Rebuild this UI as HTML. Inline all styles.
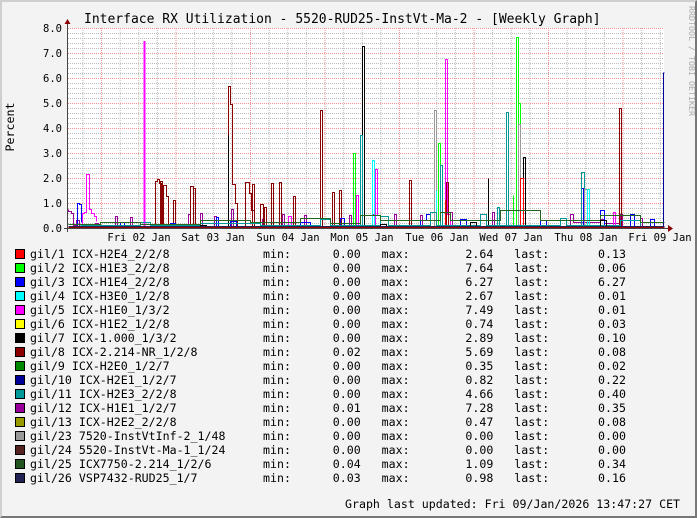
<!DOCTYPE html>
<html><head><meta charset="utf-8"><style>
html,body{margin:0;padding:0}
body{width:697px;height:518px;position:relative;background:#f3f3f3;overflow:hidden;font-family:"DejaVu Sans Mono","Liberation Mono",monospace;color:#000}
.fr{position:absolute;left:0;top:0;width:697px;height:518px;box-sizing:border-box;border-left:2px solid #cfcfcf;border-top:2px solid #cfcfcf;border-right:2px solid #777;border-bottom:2px solid #777}
.t{position:absolute;white-space:pre;font-size:11.6px;line-height:14px}
.sq{position:absolute;left:15px;width:8px;height:8px;border:1px solid #000}
</style></head><body>
<div class="fr"></div>
<div class="t" style="left:84px;top:12px;font-size:13px;line-height:16px">Interface RX Utilization - 5520-RUD25-InstVt-Ma-2 - [Weekly Graph]</div>
<div class="t" style="left:-20px;top:120px;transform:rotate(-90deg);font-size:11.6px;width:60px;text-align:center">Percent</div>
<div class="t" style="left:632px;top:54px;transform:rotate(90deg);font-size:8.3px;color:#aaa;width:120px;text-align:center">RRDTOOL / TOBI OETIKER</div>
<svg style="position:absolute;left:0;top:0" width="697" height="250">
<defs>
<pattern id="hm" x="0" y="228" width="10" height="5" patternUnits="userSpaceOnUse"><line x1="0" y1="0.5" x2="10" y2="0.5" stroke="#bbb" stroke-dasharray="1,1"/></pattern>
<pattern id="vm" x="101" y="0" width="18.625" height="10" patternUnits="userSpaceOnUse"><line x1="0.5" y1="0" x2="0.5" y2="10" stroke="#bbb" stroke-dasharray="1,1"/></pattern>
<pattern id="hM" x="0" y="228" width="10" height="25" patternUnits="userSpaceOnUse"><line x1="0" y1="0.5" x2="10" y2="0.5" stroke="#f09090" stroke-dasharray="1,1"/></pattern>
<pattern id="vM" x="101" y="0" width="74.5" height="10" patternUnits="userSpaceOnUse"><line x1="0.5" y1="0" x2="0.5" y2="10" stroke="#f09090" stroke-dasharray="1,1"/></pattern>
</defs>
<rect x="68" y="28" width="596" height="200" fill="#fff"/>
<rect x="68" y="28" width="596" height="200" fill="url(#hm)"/>
<rect x="69" y="28" width="595" height="200" fill="url(#vm)"/>
<rect x="68" y="28" width="596" height="200" fill="url(#hM)"/>
<rect x="69" y="28" width="595" height="200" fill="url(#vM)"/>
<g fill="none" stroke-width="1" transform="translate(0.5,0.5)">
<path stroke="#990099" d="M68 209V211H71V213H73V225H76V220H79V226H95V223H98V228M115 228V216H117V228M130 228V217H132V228M188 228V214H190V228M200 228V213H202V228M214 228V216H216V228M231 228V209H233V228M262 228V219H264V228M282 228V214H284V228M304 228V215H306V228M349 228V215H351V228M372 228V214H374V228M394 228V214H396V228M420 228V215H422V228M450 228V212H452V228M492 228V212H494V228M570 228V214H573V222H600V219H604V223H620V214H622V226H640V218H642V226H664"/>
<path stroke="#ff00ff" stroke-width="2" d="M144 228V40.5"/>
<path stroke="#ff00ff" d="M82 224V213H84V212H86V174H89V209H91V213H94V216H96V221M288 228V216H291V228M445 228V59H447V214H450V228M375 228V169H377V215M356 228V195H358V228M613 228V212H615V228M604 228V215"/>
<path stroke="#0000ff" d="M77 228V203H79V204H81V222M216 228V217H218V228M581 228V188H583V228"/>
<path stroke="#000099" d="M663 228V72.5H664"/>
<path stroke="#8b0000" d="M155 228V181H157V179H159V183H161V228M160 228V181H162V228M163 228V185H166V196H168V228M173 228V200H175V228M190 228V186H193V228M193 228V188H195V228M228 228V86H230V104H232V184H235V203H237V228M245 228V182H247V182H249V193H251V210H254V228M252 228V184H254V228M260 228V204H263V228M264 228V207H266V228M271 228V183H273V228M279 228V182H281V228M293 228V196H295V228M320 228V110H322V228M332 228V192H334V228M339 228V190H341V228M409 228V180H411V228M446 228V182H448V228M619 228V108H621V228"/>
<path stroke="#000" d="M362 228V46H364V228M228 228V135M523 228V157H525V228M488 228V178"/>
<path stroke="#00ff00" d="M353 228V153H355V228M438 228V143H440V228M516 228V37H518V228M518 228V103H520V228M513 228V195"/>
<path stroke="#009999" d="M360 228V135H362V228M506 228V112H508V228M581 228V172H584V228M440 228V165H442V228M497 228V207H499V228"/>
<path stroke="#999" d="M434 228V110H436V228M518 228V124H520V228M584 228V189H587V228"/>
<path stroke="#00ffff" d="M372 228V160H374V228M587 228V189H589V228M436 228V190"/>
<path stroke="#ff0000" d="M520 228V178H523V228M445 228V200"/>
<path stroke="#0000ff" d="M100 226H120V222H124V226H170V223H175V226H230V221H236V226H300V222H310V226H340V218H344V226H420V220H426V214H430V226H460V219H466V226H540V220H546V226H600V210H604V226H630V214H634V226H650V219H654V226"/>
<path stroke="#009999" d="M80 225H140V222H150V225H200V223H260V225H320V219H330V225H380V216H388V225H430V212H436V225H480V214H486V225H560V218H566V225H620V220H640V225"/>
<path stroke="#226622" d="M68 224H100V222H140V224H200V220H250V222H300V218H330V223H360V215H380V220H440V212H450V220H500V210H540V220H600V215H640V222H664"/>
<path stroke="#000" d="M90 227H200V225H206V227H380V224H386V227H470V222H476V227H600V220H606V227H664"/>
<path stroke="#222255" d="M68 226H664"/>
<path stroke="#990000" d="M68 227H664"/>
</g>
<line x1="67.5" y1="22" x2="67.5" y2="232" stroke="#444"/>
<line x1="64" y1="228.5" x2="668" y2="228.5" stroke="#444"/>
<path d="M64.5 24L67.5 19L70.5 24Z" fill="#8b0000"/>
<path d="M668 225L673 228.5L668 232Z" fill="#8b0000"/>
<g font-family="DejaVu Sans Mono,monospace" font-size="10.5" text-anchor="end">
<text x="62" y="32">8.0</text><text x="62" y="57">7.0</text><text x="62" y="82">6.0</text><text x="62" y="107">5.0</text><text x="62" y="132">4.0</text><text x="62" y="157">3.0</text><text x="62" y="182">2.0</text><text x="62" y="207">1.0</text><text x="62" y="232">0.0</text>
</g>
<g font-family="DejaVu Sans Mono,monospace" font-size="10.5" text-anchor="middle">
<text x="139" y="241">Fri 02 Jan</text><text x="213" y="241">Sat 03 Jan</text><text x="288" y="241">Sun 04 Jan</text><text x="362" y="241">Mon 05 Jan</text><text x="437" y="241">Tue 06 Jan</text><text x="511" y="241">Wed 07 Jan</text><text x="586" y="241">Thu 08 Jan</text><text x="660" y="241">Fri 09 Jan</text>
</g>
</svg>

<div class="sq" style="top:249px;background:#ff0000"></div><div class="t" style="left:30px;top:247px">gil/1 ICX-H2E4_2/2/8</div><div class="t" style="left:263px;top:247px">min:      0.00   max:        2.64   last:       0.13</div>
<div class="sq" style="top:263px;background:#00ff00"></div><div class="t" style="left:30px;top:261px">gil/2 ICX-H1E3_2/2/8</div><div class="t" style="left:263px;top:261px">min:      0.00   max:        7.64   last:       0.06</div>
<div class="sq" style="top:277px;background:#0000ff"></div><div class="t" style="left:30px;top:275px">gil/3 ICX-H1E4_2/2/8</div><div class="t" style="left:263px;top:275px">min:      0.00   max:        6.27   last:       6.27</div>
<div class="sq" style="top:291px;background:#00ffff"></div><div class="t" style="left:30px;top:289px">gil/4 ICX-H3E0_1/2/8</div><div class="t" style="left:263px;top:289px">min:      0.00   max:        2.67   last:       0.01</div>
<div class="sq" style="top:305px;background:#ff00ff"></div><div class="t" style="left:30px;top:303px">gil/5 ICX-H1E0_1/3/2</div><div class="t" style="left:263px;top:303px">min:      0.00   max:        7.49   last:       0.01</div>
<div class="sq" style="top:319px;background:#ffff00"></div><div class="t" style="left:30px;top:317px">gil/6 ICX-H1E2_1/2/8</div><div class="t" style="left:263px;top:317px">min:      0.00   max:        0.74   last:       0.03</div>
<div class="sq" style="top:333px;background:#000000"></div><div class="t" style="left:30px;top:331px">gil/7 ICX-1.000_1/3/2</div><div class="t" style="left:263px;top:331px">min:      0.00   max:        2.89   last:       0.10</div>
<div class="sq" style="top:347px;background:#8b0000"></div><div class="t" style="left:30px;top:345px">gil/8 ICX-2.214-NR_1/2/8</div><div class="t" style="left:263px;top:345px">min:      0.02   max:        5.69   last:       0.08</div>
<div class="sq" style="top:361px;background:#008800"></div><div class="t" style="left:30px;top:359px">gil/9 ICX-H2E0_1/2/7</div><div class="t" style="left:263px;top:359px">min:      0.00   max:        0.35   last:       0.02</div>
<div class="sq" style="top:375px;background:#000099"></div><div class="t" style="left:30px;top:373px">gil/10 ICX-H2E1_1/2/7</div><div class="t" style="left:263px;top:373px">min:      0.00   max:        0.82   last:       0.22</div>
<div class="sq" style="top:389px;background:#009999"></div><div class="t" style="left:30px;top:387px">gil/11 ICX-H2E3_2/2/8</div><div class="t" style="left:263px;top:387px">min:      0.00   max:        4.66   last:       0.40</div>
<div class="sq" style="top:403px;background:#990099"></div><div class="t" style="left:30px;top:401px">gil/12 ICX-H1E1_1/2/7</div><div class="t" style="left:263px;top:401px">min:      0.01   max:        7.28   last:       0.35</div>
<div class="sq" style="top:417px;background:#999900"></div><div class="t" style="left:30px;top:415px">gil/13 ICX-H2E2_2/2/8</div><div class="t" style="left:263px;top:415px">min:      0.00   max:        0.47   last:       0.08</div>
<div class="sq" style="top:431px;background:#999999"></div><div class="t" style="left:30px;top:429px">gil/23 7520-InstVtInf-2_1/48</div><div class="t" style="left:263px;top:429px">min:      0.00   max:        0.00   last:       0.00</div>
<div class="sq" style="top:445px;background:#552222"></div><div class="t" style="left:30px;top:443px">gil/24 5520-InstVt-Ma-1_1/24</div><div class="t" style="left:263px;top:443px">min:      0.00   max:        0.00   last:       0.00</div>
<div class="sq" style="top:459px;background:#225522"></div><div class="t" style="left:30px;top:457px">gil/25 ICX7750-2.214_1/2/6</div><div class="t" style="left:263px;top:457px">min:      0.04   max:        1.09   last:       0.34</div>
<div class="sq" style="top:473px;background:#222255"></div><div class="t" style="left:30px;top:471px">gil/26 VSP7432-RUD25_1/7</div><div class="t" style="left:263px;top:471px">min:      0.03   max:        0.98   last:       0.16</div>
<div class="t" style="left:345px;top:497px">Graph last updated: Fri 09/Jan/2026 13:47:27 CET</div>
</body></html>
